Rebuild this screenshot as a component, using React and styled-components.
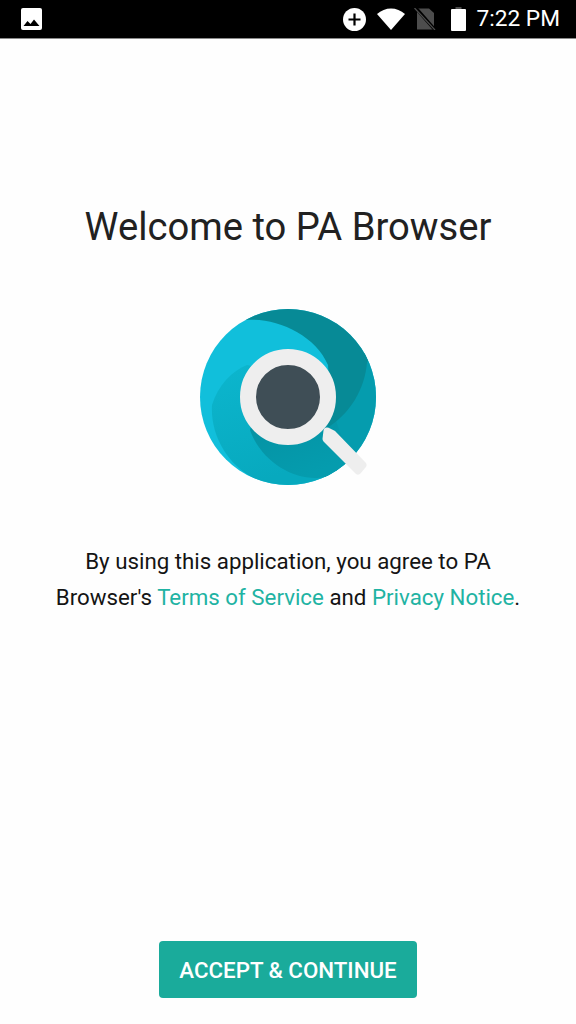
import styled, { createGlobalStyle } from 'styled-components'

const Global = createGlobalStyle`
  html, body { margin: 0; padding: 0; background: #fefefe; }
  * { box-sizing: border-box; }
`

const Screen = styled.div`
  width: 576px;
  height: 1024px;
  display: flex;
  flex-direction: column;
  align-items: center;
  font-family: Roboto, "Liberation Sans", sans-serif;
  background: #fefefe;
  overflow: hidden;
`

const StatusBar = styled.div`
  width: 100%;
  height: 39px;
  flex: none;
  background: #000;
  border-bottom: 1px solid #8a8a8a;
  display: flex;
  align-items: center;
  padding: 0 16px 0 21px;
  color: #fff;
`

const StatusRight = styled.div`
  margin-left: auto;
  display: flex;
  align-items: center;
`

const StatusIcon = styled.svg`
  display: block;
  flex: none;
  margin-left: ${p => p.$gap || 0}px;
`

const Clock = styled.span`
  font-size: 22.7px;
  margin-left: 11px;
  line-height: 38px;
`

const Title = styled.h1`
  margin: 165px 0 0;
  font-size: 38.2px;
  line-height: 46px;
  font-weight: 400;
  color: #212121;
`

const Logo = styled.svg`
  display: block;
  margin-top: 59px;
  width: 176px;
  height: 176px;
  flex: none;
`

const Agreement = styled.p`
  margin: 58px 0 0;
  width: 500px;
  font-size: 22.3px;
  line-height: 36px;
  text-align: center;
  color: #141414;
`

const TermsLink = styled.span`
  color: #1fb3a3;
`

const Accept = styled.button`
  margin-top: auto;
  margin-bottom: 26px;
  width: 258px;
  height: 57px;
  border: none;
  border-radius: 4px;
  background: #1aab9b;
  color: #fff;
  font-family: inherit;
  font-size: 22.3px;
  font-weight: 500;
  padding: 0;
`

const PictureIcon = () => (
  <StatusIcon width="21" height="22" viewBox="0 0 21 22">
    <rect width="21" height="22" rx="2" fill="#fff" />
    <path d="M2.5 18 L6.5 13 L9.5 16 L13 11.5 L18.5 18 Z" fill="#000" />
  </StatusIcon>
)

const PlusIcon = () => (
  <StatusIcon width="23" height="23" viewBox="0 0 23 23">
    <circle cx="11.5" cy="11.5" r="11.5" fill="#fff" />
    <path d="M11.5 5.5 V17.5 M5.5 11.5 H17.5" stroke="#000" strokeWidth="2.2" />
  </StatusIcon>
)

const WifiIcon = () => (
  <StatusIcon $gap={11} width="28" height="22" viewBox="0 0 28 22">
    <path d="M0 6 C8 -1.5 20 -1.5 28 6 L14 22 Z" fill="#fff" />
  </StatusIcon>
)

const NoSimIcon = () => (
  <StatusIcon $gap={9} width="22" height="22" viewBox="0 0 22 22">
    <path d="M3 0.5 H15 L20 5 V21.5 H3 Z" fill="#4d4d4d" />
    <path d="M1 -1 L22 23" stroke="#000" strokeWidth="3.4" />
    <path d="M0.5 0 L21 22" stroke="#4d4d4d" strokeWidth="1.2" />
  </StatusIcon>
)

const BatteryIcon = () => (
  <StatusIcon $gap={15} width="15" height="24" viewBox="0 0 15 24">
    <rect x="4.5" y="0" width="6" height="3" fill="#4d4d4d" />
    <rect x="0" y="2" width="15" height="22" rx="1" fill="#fff" />
  </StatusIcon>
)

const PaLogo = () => (
  <Logo viewBox="0 0 176 176">
    <defs>
      <clipPath id="disc"><circle cx="88" cy="88" r="88" /></clipPath>
      <linearGradient id="lower" x1="0" y1="0" x2="0.3" y2="1">
        <stop offset="0" stopColor="#0cb6ce" />
        <stop offset="1" stopColor="#07a9be" />
      </linearGradient>
      <linearGradient id="under" x1="0" y1="0" x2="0.5" y2="1">
        <stop offset="0" stopColor="#058fa0" />
        <stop offset="1" stopColor="#059cae" />
      </linearGradient>
    </defs>
    <g clipPath="url(#disc)">
      <rect width="176" height="176" fill="#11bfdb" />
      <path d="M12 96 C18 76 32 62 47 56 L110 70 L130 176 L70 176 C32 165 10 130 12 96 Z" fill="url(#lower)" />
      <path d="M128 56 L176 40 V176 H125 L125 120 Z" fill="#059cae" />
      <path d="M50 121 C60 150 90 170 117 169 C130 168 142 165 152 157 L132 100 L60 90 Z" fill="url(#under)" />
      <path d="M45 11 C75 8 115 25 128 56 L134 85 L127 119 C150 105 165 80 167 53 L190 40 L100 -20 Z" fill="#078a96" />
    </g>
    <path d="M127 122 L133 125 L163 156 L158 162 L126 130 Z" fill="#eeeeee" stroke="#eeeeee" strokeWidth="7" strokeLinejoin="round" />
    <circle cx="88" cy="88" r="40" fill="#3f4e56" stroke="#eeeeee" strokeWidth="16" />
  </Logo>
)

const App = () => {
  return (
    <Screen>
      <Global />
      <StatusBar>
        <PictureIcon />
        <StatusRight>
          <PlusIcon />
          <WifiIcon />
          <NoSimIcon />
          <BatteryIcon />
          <Clock>7:22 PM</Clock>
        </StatusRight>
      </StatusBar>
      <Title>Welcome to PA Browser</Title>
      <PaLogo />
      <Agreement>
        By using this application, you agree to PA Browser's <TermsLink>Terms of Service</TermsLink> and <TermsLink>Privacy Notice</TermsLink>.
      </Agreement>
      <Accept>ACCEPT &amp; CONTINUE</Accept>
    </Screen>
  )
}

export default App
